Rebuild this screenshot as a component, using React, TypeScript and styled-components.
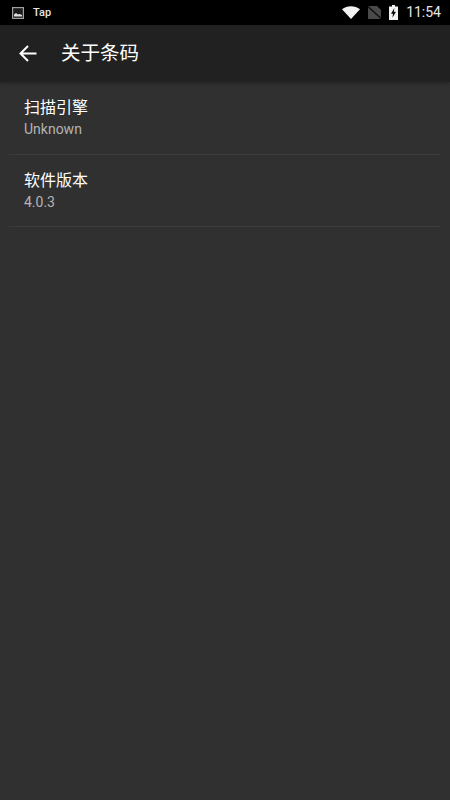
import styled, { createGlobalStyle } from 'styled-components';

const GlobalStyle = createGlobalStyle`
  html, body {
    margin: 0;
    padding: 0;
    background: #303030;
  }
  * {
    box-sizing: border-box;
  }
`;

const Screen = styled.div`
  width: 450px;
  height: 800px;
  display: flex;
  flex-direction: column;
  overflow: hidden;
  background: #303030;
  font-family: Roboto, "Noto Sans CJK SC", sans-serif;
`;

const StatusBar = styled.div`
  height: 25px;
  flex: none;
  background: #000;
  display: flex;
  align-items: center;
  justify-content: space-between;
  padding: 0 9px 0 12px;
`;

const StatusLeft = styled.div`
  display: flex;
  align-items: center;
  gap: 9px;
`;

const StatusRight = styled.div`
  display: flex;
  align-items: center;
  gap: 8px;
`;

const AppName = styled.span`
  color: #e8e8e8;
  font-size: 11px;
  font-weight: 500;
  line-height: 25px;
`;

const Clock = styled.span`
  color: #e6e6e6;
  font-size: 14px;
  line-height: 25px;
`;

const Toolbar = styled.div`
  height: 57px;
  flex: none;
  background: #212121;
  display: flex;
  align-items: center;
  padding-left: 18px;
  gap: 23px;
  box-shadow: 0 1px 4px rgba(0, 0, 0, 0.35);
  position: relative;
`;

const Title = styled.h1`
  margin: 0;
  color: #fff;
  font-size: 19.5px;
  font-weight: 400;
  line-height: 26px;
`;

const List = styled.div`
  display: flex;
  flex-direction: column;
  padding: 0 9px;
`;

const Row = styled.div`
  height: 72.5px;
  padding: 15px 15px 0;
  border-bottom: 1px solid #3c3c3c;
`;

const RowTitle = styled.div`
  color: #fff;
  font-size: 16px;
  line-height: 22px;
`;

const RowValue = styled.div`
  color: #b4b4b4;
  font-size: 14px;
  line-height: 20px;
`;

const rows = [
  { title: '扫描引擎', value: 'Unknown' },
  { title: '软件版本', value: '4.0.3' },
];

export default function App() {
  return (
    <Screen>
      <GlobalStyle />
      <StatusBar>
        <StatusLeft>
          <svg width="12" height="12" viewBox="0 0 12 12">
            <rect x="0.6" y="0.6" width="10.8" height="10.8" fill="#1c1c1c" stroke="#a0a0a0" strokeWidth="1.2" />
            <path d="M2 9.5 L2 7.5 L4 6 L6 7.5 L7.5 7 L10 8 L10 9.5 Z" fill="#e0e0e0" />
          </svg>
          <AppName>Tap</AppName>
        </StatusLeft>
        <StatusRight>
          <svg width="18" height="13" viewBox="0 0 18 13">
            <path d="M0 3.2 C5 -0.9 13 -0.9 18 3.2 L9 13 Z" fill="#f2f2f2" />
          </svg>
          <svg width="13" height="13" viewBox="0 0 13 13">
            <path d="M0 13 L0 0 L9 0 L13 4 L13 13 Z" fill="#4a4a4a" />
            <path d="M0 0.5 L13 12.5" stroke="#111" strokeWidth="1.4" />
          </svg>
          <svg width="9" height="15" viewBox="0 0 9 15">
            <path d="M3 0 H6 V1.5 H9 V15 H0 V1.5 H3 Z" fill="#f2f2f2" />
            <path d="M5.4 3 L2 8.8 H4 L3.4 12.8 L7 6.8 H4.8 Z" fill="#000" />
          </svg>
          <Clock>11:54</Clock>
        </StatusRight>
      </StatusBar>
      <Toolbar>
        <svg width="20" height="20" viewBox="0 0 20 20">
          <path
            d="M18.5 9.5 H3.5 M10 2 L2.5 9.5 L10 17"
            fill="none"
            stroke="#fff"
            strokeWidth="2"
          />
        </svg>
        <Title>关于条码</Title>
      </Toolbar>
      <List>
        {rows.map((row) => (
          <Row key={row.title}>
            <RowTitle>{row.title}</RowTitle>
            <RowValue>{row.value}</RowValue>
          </Row>
        ))}
      </List>
    </Screen>
  );
}
